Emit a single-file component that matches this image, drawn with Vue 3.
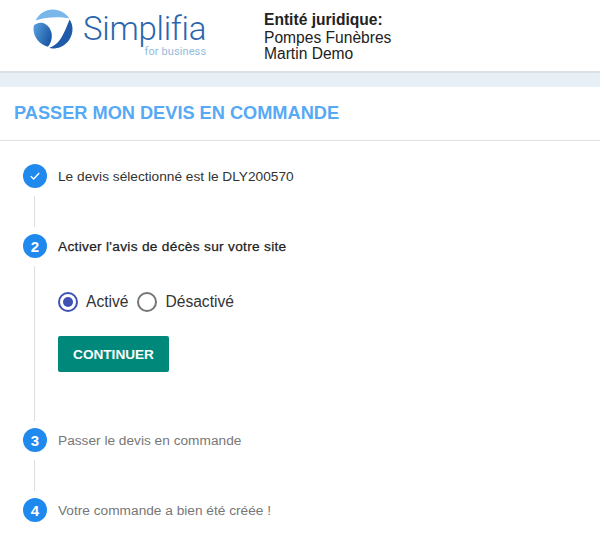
<template>
  <div class="page">
    <header class="header">
      <div class="logo">
        <svg class="mark" width="40" height="40" viewBox="0 0 40 40">
          <defs>
            <linearGradient id="lg1" x1="0" y1="0" x2="1" y2="0.5">
              <stop offset="0" stop-color="#5aa2e0" />
              <stop offset="1" stop-color="#1c5aa6" />
            </linearGradient>
          </defs>
          <path d="M2.600 11.500C5.800 4.900 12.400.5 20 .5c6.800 0 12.800 3.500 16.300 8.800C26 7.300 13 7.800 2.600 11.500Z" fill="#79b6ea" />
          <path d="M.9 16.500C2 15.200 5 13.600 8 13.700c5.500.3 10 5.300 10.800 11.500.4 4.500-1 9-3.800 12.500C6.800 35.600.5 28.500.5 20c0-1.200.1-2.400.4-3.500Z" fill="url(#lg1)" />
          <path d="M36.600 10.500C38.500 13.300 39.500 16.500 39.500 20c0 10.800-8.700 19.500-19.500 19.500-1.400 0-2.800-.2-4-.5 6-2.500 10-6 13-11.500 3-5 5-11 7.600-17Z" fill="#1f5ba8" />
        </svg>
        <div class="brand">
          <span class="name">Simplifia</span>
          <span class="sub">for business</span>
        </div>
      </div>
      <div class="entity">
        <strong>Entité juridique:</strong>
        <span>Pompes Funèbres</span>
        <span>Martin Demo</span>
      </div>
    </header>
    <div class="band"></div>
    <h1 class="title">PASSER MON DEVIS EN COMMANDE</h1>
    <main class="steps">
      <div class="step">
        <span class="dot">
          <svg width="14" height="14" viewBox="0 0 14 14"><path d="M2.800 7.300 5.700 10l5.500-6" fill="none" stroke="#fff" stroke-width="1.300" /></svg>
        </span>
        <span class="label done">Le devis sélectionné est le DLY200570</span>
      </div>
      <div class="line short"></div>
      <div class="step">
        <span class="dot">2</span>
        <span class="label active">Activer l'avis de décès sur votre site</span>
      </div>
      <div class="line tall">
        <div class="content">
          <div class="radios">
            <span class="radio on"><i></i></span>
            <span class="opt">Activé</span>
            <span class="radio"></span>
            <span class="opt">Désactivé</span>
          </div>
          <button class="btn">CONTINUER</button>
        </div>
      </div>
      <div class="step">
        <span class="dot">3</span>
        <span class="label">Passer le devis en commande</span>
      </div>
      <div class="line short"></div>
      <div class="step">
        <span class="dot">4</span>
        <span class="label">Votre commande a bien été créée !</span>
      </div>
    </main>
  </div>
</template>

<script setup>
</script>

<style>
html, body { margin: 0; background: #fff; }
</style>

<style scoped>
.page {
  width: 600px;
  height: 539px;
  overflow: hidden;
  background: #fff;
  font-family: "Liberation Sans", Arial, sans-serif;
  color: #2b2b2b;
}
.header {
  box-sizing: border-box;
  border-bottom: 2px solid #d9dfe3;
  height: 73px;
  display: flex;
  align-items: flex-start;
}
.logo {
  display: flex;
  align-items: flex-start;
  margin-left: 33px;
  width: 231px;
  padding-top: 9px;
}
.mark { flex: none; }
.brand {
  display: flex;
  flex-direction: column;
  align-items: flex-end;
  margin-left: 10px;
  margin-top: 1px;
}
.name {
  font-family: Roboto, sans-serif;
  font-weight: 300;
  font-size: 33px;
  line-height: 37px;
  letter-spacing: -0.25px;
  font-variant-ligatures: none;
  color: #2a66ae;
}
.sub {
  font-family: Roboto, sans-serif;
  font-weight: 400;
  font-size: 11px;
  line-height: 10px;
  letter-spacing: 0.1px;
  color: #93bbdd;
}
.entity {
  display: flex;
  flex-direction: column;
  padding-top: 11px;
  font-size: 15.600px;
  line-height: 16px;
  color: #222;
}
.entity strong { line-height: 17px; margin-bottom: 2px; }
.band {
  height: 14px;
  background: #e8f0f7;
}
.title {
  margin: 0;
  height: 54px;
  box-sizing: border-box;
  border-bottom: 1px solid #dfdfdf;
  padding: 16px 0 0 14px;
  font-size: 18.200px;
  line-height: 21px;
  font-weight: 700;
  color: #56a9f5;
}
.steps {
  padding: 23px 0 0 23px;
}
.step {
  display: flex;
  align-items: center;
  height: 24px;
}
.dot {
  flex: none;
  width: 24px;
  height: 24px;
  border-radius: 50%;
  background: #2089ee;
  color: #fff;
  font-size: 15px;
  font-weight: 700;
  display: flex;
  align-items: center;
  justify-content: center;
}
.label {
  margin-left: 11px;
  font-size: 13.700px;
  line-height: 26px;
  color: #777;
  padding-top: 1px;
}
.label.done { color: #333; }
.label.active { color: #222; letter-spacing: 0.3px; -webkit-text-stroke: 0.25px #222; }
.line {
  margin: 8px 0 7px 11px;
  border-left: 1px solid #dedede;
}
.line.short { height: 31px; }
.line.tall { height: 155px; }
.content {
  padding: 25px 0 0 23px;
}
.radios {
  display: flex;
  align-items: center;
  height: 22px;
  font-size: 15.600px;
  color: #333;
}
.radio {
  width: 20px;
  height: 20px;
  box-sizing: border-box;
  border: 2px solid #757575;
  border-radius: 50%;
  display: flex;
  align-items: center;
  justify-content: center;
}
.radio.on { border-color: #3f51b5; }
.radio.on i {
  width: 10px;
  height: 10px;
  border-radius: 50%;
  background: #3f51b5;
}
.opt { margin-left: 8px; margin-right: 9px; }
.btn {
  display: block;
  margin-top: 23px;
  width: 111px;
  height: 36px;
  border: 0;
  border-radius: 2px;
  background: #00897b;
  color: #fff;
  font-family: inherit;
  font-size: 13.600px;
  font-weight: 700;
  padding: 0;
}
</style>
